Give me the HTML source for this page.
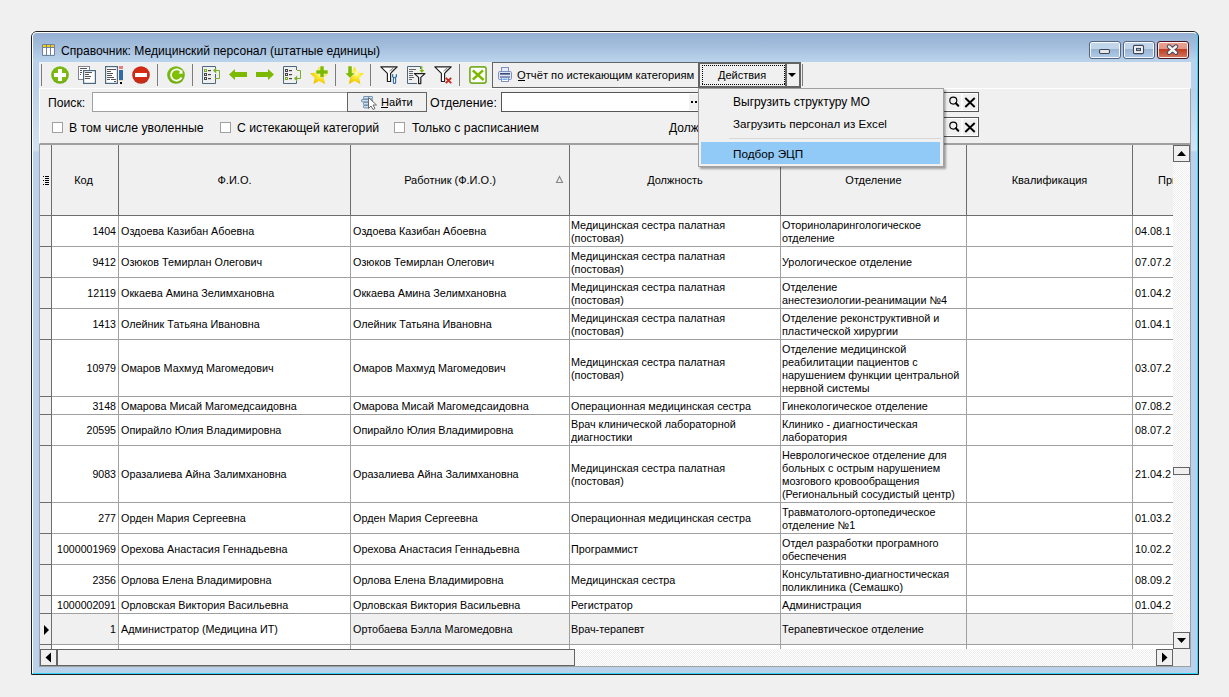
<!DOCTYPE html><html><head><meta charset="utf-8"><title>Справочник</title><style>*{margin:0;padding:0;box-sizing:border-box}
html,body{width:1229px;height:697px;overflow:hidden;background:#f0f0f0;font-family:"Liberation Sans",sans-serif;color:#000}
body{position:relative}
.a{position:absolute}
#win{position:absolute;left:31px;top:31px;width:1168px;height:644px;border:1px solid #1e1e1e;border-radius:6px 6px 0 0;
 background:linear-gradient(#95b0d3 1px,#a3bddc 14px,#bad3ec 29px,#b9d1ea 31px,#b9d1ea 100%)}
#wini{position:absolute;left:0;top:0;right:0;bottom:0;border-radius:5px 5px 0 0;border-top:1px solid #fff;border-left:1px solid #fff;border-right:1px solid #2ed3ff;border-bottom:1px solid #2ed3ff}
#title{position:absolute;left:61px;top:43px;font-size:12.1px;line-height:16px;color:#000;white-space:nowrap}
#client{position:absolute;left:39px;top:62px;width:1152px;height:605px;background:#f0f0f0}
.sep{position:absolute;top:64px;width:1px;height:22px;background:#7c7c7c}
.ico{position:absolute;top:66px;width:18px;height:18px}
.t11{font-size:11px;line-height:13px;white-space:nowrap}
.t12{font-size:12px;line-height:15px;white-space:nowrap}
#panel{position:absolute;left:39px;top:88px;width:1152px;height:56px;border-top:1px solid #fff;border-left:1px solid #fff;border-right:1px solid #a0a0a0;border-bottom:1px solid #a0a0a0}
.sfr{position:absolute;top:62px;width:6px;height:605px;background:linear-gradient(#b9d1ea 0,#b9d1ea 28px,#d3e3f4 88px,#b9d1ea 90px,#b9d1ea 100%)}
.inp{position:absolute;background:#fff;border:1px solid #a0a0a0}
.chk{position:absolute;top:122px;width:11px;height:11px;background:#fff;border:1px solid #a0a0a0}
.btn{position:absolute;border:1px solid #707070;background:#f0f0f0}
#grid{position:absolute;left:0;top:0;width:1173px;height:649px;overflow:hidden}
.c{position:absolute;font-size:10.8px;line-height:13px;white-space:nowrap;overflow:hidden;color:#000}
.c.r{text-align:right;font-size:10.6px}
.rl{position:absolute;left:40px;width:1133px;height:1px;background:#a0a0a0}
.vl{position:absolute;top:216px;height:433px;width:1px;background:#a0a0a0}
.selbg{position:absolute;background:#f0f0f0}
.ind{position:absolute;left:44px;width:0;height:0;border-left:5px solid #000;border-top:5px solid transparent;border-bottom:5px solid transparent}
.hc{position:absolute;top:145px;height:70px;font-size:11px;line-height:13px;white-space:nowrap;text-align:center}

.capb{width:32px;height:18px;border:1px solid #56657e;border-radius:3px;box-shadow:inset 0 0 0 1px rgba(255,255,255,.85);
 background:linear-gradient(#c3d6eb 0,#c0d4ea 7px,#98b4d3 7px,#a4bfdd 11px,#b3cde9 17px)}
.capx{border-color:#4a1420;background:linear-gradient(#eba393 0,#e39585 7px,#bf3c20 7px,#c8553a 11px,#d7826c 17px)}
.dh{height:1px;background:repeating-linear-gradient(90deg,#000 0 1px,transparent 1px 2px)}
.dv{width:1px;background:repeating-linear-gradient(180deg,#000 0 1px,transparent 1px 2px)}
.chk2{background:repeating-conic-gradient(#fff 0 25%,#eeeeee 0 50%) 0 0/2px 2px}
.sbtn{position:absolute;width:17px;height:17px;background:#f0f0f0;border:1px solid #646464}
.rld{position:absolute;left:40px;width:11px;height:1px;background:#6d6d6d}
.vd{background:#6d6d6d}
</style></head><body>
<div id="win"><div id="wini"></div></div>
<!-- title icon -->
<svg class="a" style="left:42px;top:44px" width="13" height="12" viewBox="42 44 13 12">
<rect x="42" y="44" width="13" height="12" rx="1.2" fill="#6f8399"/>
<g fill="#fff"><rect x="43" y="48" width="3" height="7"/><rect x="47" y="48" width="3" height="7"/><rect x="51" y="48" width="3" height="7"/></g>
<g fill="#f6cc14"><rect x="43" y="45" width="3" height="2"/><rect x="47" y="45" width="3" height="2"/><rect x="51" y="45" width="3" height="2"/></g>
<g fill="#e4f6fb"><rect x="43" y="54" width="3" height="1"/><rect x="47" y="54" width="3" height="1"/><rect x="51" y="54" width="3" height="1"/></g>
</svg>
<div id="title">Справочник: Медицинский персонал (штатные единицы)</div>
<!-- caption buttons -->
<div class="a capb" style="left:1089px;top:41px"></div>
<div class="a capb" style="left:1123px;top:41px"></div>
<div class="a capb capx" style="left:1157px;top:41px"></div>
<svg class="a" style="left:1085px;top:38px" width="110" height="24" viewBox="1085 38 110 24">
<rect x="1099.5" y="49.5" width="10" height="4" rx="1.2" fill="#e8e8e8" stroke="#3c4658" stroke-width="1.1"/>
<rect x="1133.5" y="45.4" width="10" height="8.2" rx="1.2" fill="#f2f2f2" stroke="#3c4658" stroke-width="1.1"/>
<rect x="1136.5" y="48.4" width="4" height="2.2" fill="#9ab6d6" stroke="#3c4658" stroke-width="1"/>
<path d="M1169 46.5 L1172.5 49.6 L1176 46.5 M1169 52.7 L1172.5 49.6 L1176 52.7" fill="none" stroke="#3c4658" stroke-width="4.4" stroke-linecap="round" stroke-linejoin="round"/>
<path d="M1169 46.5 L1172.5 49.6 L1176 46.5 M1169 52.7 L1172.5 49.6 L1176 52.7" fill="none" stroke="#f4f4f4" stroke-width="2.5" stroke-linecap="round" stroke-linejoin="round"/>
</svg>
<div class="sfr" style="left:33px"></div><div class="sfr" style="left:1191px"></div>
<div id="client"></div>
<!-- toolbar -->
<div class="sep" style="left:41px"></div>
<div class="sep" style="left:157px"></div>
<div class="sep" style="left:192px"></div>
<div class="sep" style="left:335px"></div>
<div class="sep" style="left:370px"></div>
<div class="sep" style="left:459px"></div>
<div class="sep" style="left:802px"></div>
<!-- report button -->
<div class="a" style="left:492px;top:62px;width:207px;height:26px;border:1px solid #646464;border-right:none;background:#f0f0f0"></div>
<div class="a t11" style="left:517px;top:69px;font-size:11.2px">Отчёт по истекающим категориям</div>
<div class="a" style="left:518px;top:80px;width:7px;height:1px;background:#000"></div>
<!-- actions button -->
<div class="a" style="left:698px;top:62px;width:103px;height:26px;border:2px solid #646464;background:#f0f0f0"></div>
<div class="a dh" style="left:702px;top:65px;width:83px"></div><div class="a dh" style="left:702px;top:84px;width:83px"></div><div class="a dv" style="left:702px;top:65px;height:20px"></div><div class="a dv" style="left:784px;top:65px;height:20px"></div>
<div class="a" style="left:785px;top:62px;width:2px;height:26px;background:#646464"></div>
<div class="a t11" style="left:718px;top:69px">Действия</div>
<div class="a" style="left:788px;top:73px;width:0;height:0;border-top:4px solid #000;border-left:4px solid transparent;border-right:4px solid transparent"></div>
<!-- panel -->
<div id="panel"></div>
<div class="a t12" style="left:48px;top:96px;font-size:12.2px">Поиск:</div>
<div class="inp" style="left:92px;top:92px;width:256px;height:20px"></div>
<div class="btn" style="left:347px;top:92px;width:80px;height:20px;border-color:#646464"></div>
<div class="a t11" style="left:381px;top:96px;font-size:11.1px">Найти</div>
<div class="a" style="left:381px;top:107px;width:7px;height:1px;background:#000"></div>
<svg class="a" style="left:360px;top:95px" width="18" height="16" viewBox="360 95 18 16">
<g fill="#cfdeea" stroke="#7193b2" stroke-width="1">
<rect x="363.5" y="96.5" width="9" height="2.4" rx="0.6"/>
<rect x="361.5" y="99.5" width="7" height="2.4" rx="0.6"/>
<rect x="363.5" y="102.5" width="5" height="2.4" rx="0.6"/>
<rect x="363.5" y="105.5" width="5" height="2.4" rx="0.6"/>
<rect x="369.5" y="99.5" width="3" height="2.4" rx="0.6"/>
</g>
<path d="M368.5 97.5 V108.5 L371 106 L373 109.5 L375 108.5 L373 105 L376.5 105 Z" fill="#fff" stroke="#6a6a6a" stroke-width="1"/>
</svg>
<div class="a t12" style="left:430px;top:96px;font-size:12.4px">Отделение:</div>
<div class="inp" style="left:501px;top:92px;width:478px;height:20px;border-color:#555"></div>
<div class="a" style="left:689px;top:94px;width:20px;height:16px;background:#f0f0f0"></div>
<div class="a" style="left:691px;top:101px;width:2px;height:2px;background:#000"></div>
<div class="a" style="left:695px;top:101px;width:2px;height:2px;background:#000"></div>
<div class="a" style="left:699px;top:101px;width:2px;height:2px;background:#000"></div>
<div class="a" style="left:947px;top:94px;width:14px;height:16px;background:#f0f0f0"></div>
<div class="a" style="left:963px;top:94px;width:14px;height:16px;background:#f0f0f0"></div>

<div class="chk" style="left:52px"></div>
<div class="a t12" style="left:69px;top:121px;font-size:12.25px">В том числе уволенные</div>
<div class="chk" style="left:220px"></div>
<div class="a t12" style="left:237px;top:121px;font-size:12.25px">С истекающей категорий</div>
<div class="chk" style="left:394px"></div>
<div class="a t12" style="left:412px;top:121px;font-size:12.25px">Только с расписанием</div>
<div class="a t12" style="left:669px;top:121px">Должность:</div>
<div class="inp" style="left:737px;top:117px;width:242px;height:20px;border-color:#555"></div>
<div class="a" style="left:947px;top:119px;width:14px;height:16px;background:#f0f0f0"></div>
<div class="a" style="left:963px;top:119px;width:14px;height:16px;background:#f0f0f0"></div>
<svg class="a" style="left:945px;top:92px" width="34" height="46" viewBox="945 92 34 46">
<g id="lk"><circle cx="953.3" cy="100.6" r="3.5" fill="none" stroke="#000" stroke-width="1.15"/><path d="M955.8 103.2 L958.3 105.8" stroke="#000" stroke-width="2" stroke-linecap="round"/>
<path d="M965.3 98 L974.7 107 M974.7 98 L965.3 107" stroke="#000" stroke-width="1.9"/></g>
<use href="#lk" y="25"/>
</svg>
<!-- grid background -->
<div class="a" style="left:39px;top:144px;width:1152px;height:1px;background:#a0a0a0"></div>
<div class="a" style="left:39px;top:145px;width:1px;height:522px;background:#a0a0a0"></div>
<div class="a" style="left:40px;top:145px;width:1133px;height:70px;background:#f0f0f0"></div>
<div class="a" style="left:40px;top:215px;width:1133px;height:1px;background:#6d6d6d"></div>
<div class="a" style="left:40px;top:216px;width:1133px;height:433px;background:#fff"></div>
<div class="a" style="left:40px;top:216px;width:11px;height:433px;background:#f0f0f0"></div>
<div class="a" style="left:51px;top:145px;width:1px;height:70px;background:#6d6d6d"></div>
<div class="a" style="left:118px;top:145px;width:1px;height:70px;background:#6d6d6d"></div>
<div class="a" style="left:350px;top:145px;width:1px;height:70px;background:#6d6d6d"></div>
<div class="a" style="left:569px;top:145px;width:1px;height:70px;background:#6d6d6d"></div>
<div class="a" style="left:780px;top:145px;width:1px;height:70px;background:#6d6d6d"></div>
<div class="a" style="left:966px;top:145px;width:1px;height:70px;background:#6d6d6d"></div>
<div class="a" style="left:1132px;top:145px;width:1px;height:70px;background:#6d6d6d"></div>
<div class="hc" style="left:52px;width:63px;padding-top:29px">Код</div>
<div class="hc" style="left:119px;width:231px;padding-top:29px">Ф.И.О.</div>
<div class="hc" style="left:351px;width:198px;padding-top:29px">Работник (Ф.И.О.)</div>
<div class="hc" style="left:570px;width:210px;padding-top:29px">Должность</div>
<div class="hc" style="left:781px;width:185px;padding-top:29px">Отделение</div>
<div class="hc" style="left:967px;width:165px;padding-top:29px">Квалификация</div>
<div class="a t11" style="left:1158px;top:174px;width:15px;overflow:hidden">При</div>
<div class="a" style="left:1190px;top:145px;width:1px;height:522px;background:#a0a0a0"></div>
<div class="a" style="left:39px;top:666px;width:1152px;height:1px;background:#a0a0a0"></div>
<svg class="a" style="left:40px;top:170px" width="530" height="20" viewBox="40 170 530 20">
<g fill="#000"><rect x="43" y="176" width="1" height="1"/><rect x="43" y="180" width="1" height="1"/><rect x="43" y="184" width="1" height="1"/>
<rect x="45" y="176" width="4" height="1"/><rect x="45" y="178" width="4" height="1"/><rect x="45" y="180" width="4" height="1"/><rect x="45" y="182" width="4" height="1"/><rect x="45" y="184" width="4" height="1"/></g>
<path d="M559.5 176.5 L556.5 182.5 H562.5 Z" fill="none" stroke="#858585" stroke-width="1.1"/>
</svg>

<svg class="a" style="left:0;top:60px" width="520" height="30" viewBox="0 60 520 30">
<defs>
<radialGradient id="gG" cx="0.5" cy="0.45" r="0.55"><stop offset="0" stop-color="#84c400"/><stop offset="0.75" stop-color="#79b80e"/><stop offset="1" stop-color="#6ea51e"/></radialGradient>
<radialGradient id="gR" cx="0.5" cy="0.4" r="0.55"><stop offset="0" stop-color="#dc2a10"/><stop offset="0.8" stop-color="#cc2a16"/><stop offset="1" stop-color="#b8301f"/></radialGradient>
<radialGradient id="gS" cx="0.6" cy="0.4" r="0.6"><stop offset="0" stop-color="#fffbd0"/><stop offset="0.35" stop-color="#ffee33"/><stop offset="1" stop-color="#ecc000"/></radialGradient>
</defs>
<!-- add -->
<circle cx="60" cy="75" r="8.8" fill="url(#gG)"/>
<rect x="54" y="73" width="12" height="4" fill="#fff"/>
<rect x="58" y="69" width="4" height="12" fill="#fff"/>
<!-- copy -->
<rect x="78.5" y="66.5" width="11" height="13" fill="#fff" stroke="#80868c"/>
<g fill="#555"><rect x="80" y="68" width="7" height="1"/><rect x="80" y="70" width="2" height="1"/><rect x="80" y="72" width="2" height="1"/><rect x="80" y="74" width="1" height="1"/></g>
<rect x="83.6" y="70.6" width="11.8" height="12.8" fill="#fff" stroke="#4b6a80" stroke-width="1.2"/>
<g fill="#555"><rect x="85" y="72" width="7" height="1"/><rect x="85" y="74" width="4" height="1"/><rect x="85" y="76" width="6" height="1"/><rect x="85" y="78" width="5" height="1"/></g>
<!-- edit -->
<rect x="105.6" y="66.6" width="11.8" height="16.8" fill="#fff" stroke="#4b6a80" stroke-width="1.2"/>
<g fill="#555"><rect x="107" y="69" width="9" height="1"/><rect x="107" y="71" width="4" height="1"/><rect x="107" y="73" width="6" height="1"/><rect x="107" y="75" width="5" height="1"/><rect x="107" y="77" width="7" height="1"/><rect x="107" y="79" width="3" height="1"/><rect x="111" y="79" width="5" height="1"/><rect x="114" y="81" width="2" height="1"/></g>
<rect x="119" y="66" width="4" height="3" fill="#e28080"/>
<rect x="119" y="70" width="4" height="10" fill="#2e6aa6"/>
<rect x="119" y="80" width="4" height="1" fill="#e8d8b0"/>
<rect x="120" y="82" width="2" height="2" fill="#000"/>
<!-- delete -->
<circle cx="141" cy="75" r="8.8" fill="url(#gR)"/>
<rect x="135" y="73" width="12" height="4" fill="#fff"/>
<!-- refresh -->
<circle cx="176" cy="75" r="8.8" fill="url(#gG)"/>
<path d="M181.5 72.2 A5.6 5.6 0 1 0 181.6 77.5" fill="none" stroke="#fff" stroke-width="1.8"/>
<path d="M178.6 73.6 L182.6 73.8 L182.2 69.6 Z" fill="#fff"/>
<!-- list 1 -->
<path d="M215.5 70 V66.5 H202.5 V83.5 H215.5 V74" fill="none" stroke="#4b6a80"/>
<rect x="204.5" y="69.5" width="2" height="2" fill="none" stroke="#78ae28"/>
<rect x="204.5" y="73.5" width="2" height="2" fill="none" stroke="#444"/>
<rect x="204.5" y="77.5" width="2" height="2" fill="none" stroke="#444"/>
<g fill="#444"><rect x="208" y="70" width="3" height="1.2"/><rect x="208" y="74" width="3" height="1.2"/><rect x="208" y="78" width="3" height="1.2"/></g>
<path d="M215 70.5 H219.5 V78.5 H215" fill="none" stroke="#78ae28"/>
<path d="M213 70.5 L216.2 67.6 V73.4 Z" fill="#78ae28"/>
<!-- left arrow -->
<path d="M229 74.5 L235 69 V72 H247 V77 H235 V80 Z" fill="#7cb900"/>
<!-- right arrow -->
<path d="M274 74.5 L268 69 V72 H256 V77 H268 V80 Z" fill="#7cb900"/>
<!-- list 2 -->
<path d="M296.5 70 V66.5 H283.5 V83.5 H296.5 V81" fill="none" stroke="#4b6a80"/>
<rect x="285.5" y="69.5" width="2" height="2" fill="none" stroke="#444"/>
<rect x="285.5" y="73.5" width="2" height="2" fill="none" stroke="#444"/>
<rect x="285.5" y="77.5" width="2" height="2" fill="none" stroke="#78ae28"/>
<g fill="#444"><rect x="289" y="70" width="3" height="1.2"/><rect x="289" y="74" width="3" height="1.2"/><rect x="289" y="78" width="3" height="1.2"/></g>
<path d="M297 70.5 H300.5 V78.5 H296" fill="none" stroke="#78ae28"/>
<path d="M294 78.5 L297.2 75.6 V81.4 Z" fill="#78ae28"/>
<!-- star plus -->
<path d="M319.2 66.4 L322.0 72.4 L328.5 73.2 L323.7 77.7 L325.0 84.1 L319.2 80.9 L313.4 84.1 L314.7 77.7 L309.9 73.2 L316.4 72.4 Z" fill="url(#gS)"/>
<path d="M320 66 H324 V70 H328 V74 H324 V77.5 H320 V74 H316 V70 H320 Z" fill="#7cb900" stroke="#f4f4e0" stroke-width="0.6"/>
<!-- star download -->
<path d="M354.6 66.4 L357.4 72.4 L363.9 73.2 L359.1 77.7 L360.4 84.1 L354.6 80.9 L348.8 84.1 L350.1 77.7 L345.3 73.2 L351.8 72.4 Z" fill="url(#gS)"/>
<path d="M348 66 H352 V73 H355 L350 78 L345 73 H348 Z" fill="#7cb900" stroke="#f0f0f0" stroke-width="0.5"/>
<!-- filter tool -->
<path d="M380.8 66.9 H397.2 L390.6 73.4 V81.5 H387.4 V73.4 Z" fill="#fff" stroke="#1e1e1e" stroke-width="1.15" stroke-linejoin="round"/>
<path d="M389.4 71.2 L393.4 67.8 M391 71.6 L394.6 68.4" stroke="#555" stroke-width="0.7"/>
<path d="M392.6 74.2 V76.6 L393.8 77.6 H395.2 L396.4 76.6 V74.2" fill="none" stroke="#2e6aa6" stroke-width="1.2"/>
<rect x="393.4" y="77.8" width="2.2" height="5.6" rx="0.6" fill="#fff" stroke="#2e6aa6" stroke-width="1.1"/>
<!-- filter doc -->
<path d="M420.5 69 V66.5 H407.5 V83.5 H417" fill="none" stroke="#4b6a80"/>
<g fill="#666"><rect x="409" y="69" width="7" height="1"/><rect x="409" y="71" width="4" height="1"/><rect x="409" y="73" width="4" height="1"/><rect x="409" y="75" width="4" height="1"/><rect x="409" y="77" width="5" height="1"/><rect x="409" y="79" width="3" height="1"/></g>
<path d="M414.4 73.6 H425 L420.8 77.4 V83.6 H418.6 V77.4 Z" fill="#fff" stroke="#1e1e1e" stroke-width="1.2" stroke-linejoin="round"/>
<path d="M421.8 66 V71" stroke="#7cb900" stroke-width="1.2"/>
<path d="M419.6 70 L421.8 73 L424.4 70 Z" fill="#7cb900"/>
<!-- filter x -->
<path d="M434.8 66.9 H451.2 L444.6 73.4 V81.5 H441.4 V73.4 Z" fill="#fff" stroke="#1e1e1e" stroke-width="1.15" stroke-linejoin="round"/>
<path d="M443.4 71.2 L447.4 67.8 M445 71.6 L448.6 68.4" stroke="#555" stroke-width="0.7"/>
<path d="M445.8 77.8 L451.2 83.2 M451.2 77.8 L445.8 83.2" stroke="#c8261c" stroke-width="1.8"/>
<!-- excel -->
<rect x="469.9" y="66.9" width="16.2" height="16.2" rx="2.2" fill="#fff" stroke="#78ae28" stroke-width="1.7"/>
<path d="M472.8 70.4 L483.6 80 M483 70.4 L472.8 79.6" stroke="#7cb900" stroke-width="2.6"/>
<!-- printer -->
<rect x="501.5" y="67.5" width="7" height="5" fill="#e6ecf6" stroke="#7f91c2"/>
<rect x="498.5" y="71.5" width="13" height="8" rx="1.2" fill="#dfe6f3" stroke="#7f91c2"/>
<rect x="500" y="73" width="10" height="1.6" fill="#3a4a7a"/>
<rect x="500" y="76.5" width="10" height="1" fill="#3a4a7a"/>
<rect x="501.5" y="77.5" width="7" height="4" fill="#fff" stroke="#7f91c2"/>
<rect x="502.5" y="78.5" width="5" height="1.5" fill="#6fb0e8"/>
</svg>

<div id="grid">
<div class="rl" style="top:246px"></div>
<div class="rld" style="top:246px"></div>
<div class="c r" style="top:225px;left:52px;width:64px">1404</div>
<div class="c" style="top:225px;left:121px;width:228px">Оздоева Казибан Абоевна</div>
<div class="c" style="top:225px;left:353px;width:215px">Оздоева Казибан Абоевна</div>
<div class="c" style="top:219px;left:571px;width:208px">Медицинская сестра палатная<br>(постовая)</div>
<div class="c" style="top:219px;left:782px;width:183px">Оториноларингологическое<br>отделение</div>
<div class="c" style="top:225px;left:1135px;width:38px">04.08.1</div>
<div class="rl" style="top:277px"></div>
<div class="rld" style="top:277px"></div>
<div class="c r" style="top:256px;left:52px;width:64px">9412</div>
<div class="c" style="top:256px;left:121px;width:228px">Озюков Темирлан Олегович</div>
<div class="c" style="top:256px;left:353px;width:215px">Озюков Темирлан Олегович</div>
<div class="c" style="top:250px;left:571px;width:208px">Медицинская сестра палатная<br>(постовая)</div>
<div class="c" style="top:256px;left:782px;width:183px">Урологическое отделение</div>
<div class="c" style="top:256px;left:1135px;width:38px">07.07.2</div>
<div class="rl" style="top:308px"></div>
<div class="rld" style="top:308px"></div>
<div class="c r" style="top:287px;left:52px;width:64px">12119</div>
<div class="c" style="top:287px;left:121px;width:228px">Оккаева Амина Зелимхановна</div>
<div class="c" style="top:287px;left:353px;width:215px">Оккаева Амина Зелимхановна</div>
<div class="c" style="top:281px;left:571px;width:208px">Медицинская сестра палатная<br>(постовая)</div>
<div class="c" style="top:281px;left:782px;width:183px">Отделение<br>анестезиологии-реанимации №4</div>
<div class="c" style="top:287px;left:1135px;width:38px">01.04.2</div>
<div class="rl" style="top:339px"></div>
<div class="rld" style="top:339px"></div>
<div class="c r" style="top:318px;left:52px;width:64px">1413</div>
<div class="c" style="top:318px;left:121px;width:228px">Олейник Татьяна Ивановна</div>
<div class="c" style="top:318px;left:353px;width:215px">Олейник Татьяна Ивановна</div>
<div class="c" style="top:312px;left:571px;width:208px">Медицинская сестра палатная<br>(постовая)</div>
<div class="c" style="top:312px;left:782px;width:183px">Отделение реконструктивной и<br>пластической хирургии</div>
<div class="c" style="top:318px;left:1135px;width:38px">01.04.1</div>
<div class="rl" style="top:396px"></div>
<div class="rld" style="top:396px"></div>
<div class="c r" style="top:362px;left:52px;width:64px">10979</div>
<div class="c" style="top:362px;left:121px;width:228px">Омаров Махмуд Магомедович</div>
<div class="c" style="top:362px;left:353px;width:215px">Омаров Махмуд Магомедович</div>
<div class="c" style="top:356px;left:571px;width:208px">Медицинская сестра палатная<br>(постовая)</div>
<div class="c" style="top:343px;left:782px;width:183px">Отделение медицинской<br>реабилитации пациентов с<br>нарушением функции центральной<br>нервной системы</div>
<div class="c" style="top:362px;left:1135px;width:38px">03.07.2</div>
<div class="rl" style="top:414px"></div>
<div class="rld" style="top:414px"></div>
<div class="c r" style="top:400px;left:52px;width:64px">3148</div>
<div class="c" style="top:400px;left:121px;width:228px">Омарова Мисай Магомедсаидовна</div>
<div class="c" style="top:400px;left:353px;width:215px">Омарова Мисай Магомедсаидовна</div>
<div class="c" style="top:400px;left:571px;width:208px">Операционная медицинская сестра</div>
<div class="c" style="top:400px;left:782px;width:183px">Гинекологическое отделение</div>
<div class="c" style="top:400px;left:1135px;width:38px">07.08.2</div>
<div class="rl" style="top:445px"></div>
<div class="rld" style="top:445px"></div>
<div class="c r" style="top:424px;left:52px;width:64px">20595</div>
<div class="c" style="top:424px;left:121px;width:228px">Опирайло Юлия Владимировна</div>
<div class="c" style="top:424px;left:353px;width:215px">Опирайло Юлия Владимировна</div>
<div class="c" style="top:418px;left:571px;width:208px">Врач клинической лабораторной<br>диагностики</div>
<div class="c" style="top:418px;left:782px;width:183px">Клинико - диагностическая<br>лаборатория</div>
<div class="c" style="top:424px;left:1135px;width:38px">08.07.2</div>
<div class="rl" style="top:502px"></div>
<div class="rld" style="top:502px"></div>
<div class="c r" style="top:468px;left:52px;width:64px">9083</div>
<div class="c" style="top:468px;left:121px;width:228px">Оразалиева Айна Залимхановна</div>
<div class="c" style="top:468px;left:353px;width:215px">Оразалиева Айна Залимхановна</div>
<div class="c" style="top:462px;left:571px;width:208px">Медицинская сестра палатная<br>(постовая)</div>
<div class="c" style="top:449px;left:782px;width:183px">Неврологическое отделение для<br>больных с острым нарушением<br>мозгового кровообращения<br>(Региональный сосудистый центр)</div>
<div class="c" style="top:468px;left:1135px;width:38px">21.04.2</div>
<div class="rl" style="top:533px"></div>
<div class="rld" style="top:533px"></div>
<div class="c r" style="top:512px;left:52px;width:64px">277</div>
<div class="c" style="top:512px;left:121px;width:228px">Орден Мария Сергеевна</div>
<div class="c" style="top:512px;left:353px;width:215px">Орден Мария Сергеевна</div>
<div class="c" style="top:512px;left:571px;width:208px">Операционная медицинская сестра</div>
<div class="c" style="top:506px;left:782px;width:183px">Травматолого-ортопедическое<br>отделение №1</div>
<div class="c" style="top:512px;left:1135px;width:38px">01.03.2</div>
<div class="rl" style="top:564px"></div>
<div class="rld" style="top:564px"></div>
<div class="c r" style="top:543px;left:52px;width:64px">1000001969</div>
<div class="c" style="top:543px;left:121px;width:228px">Орехова Анастасия Геннадьевна</div>
<div class="c" style="top:543px;left:353px;width:215px">Орехова Анастасия Геннадьевна</div>
<div class="c" style="top:543px;left:571px;width:208px">Программист</div>
<div class="c" style="top:537px;left:782px;width:183px">Отдел разработки програмного<br>обеспечения</div>
<div class="c" style="top:543px;left:1135px;width:38px">10.02.2</div>
<div class="rl" style="top:595px"></div>
<div class="rld" style="top:595px"></div>
<div class="c r" style="top:574px;left:52px;width:64px">2356</div>
<div class="c" style="top:574px;left:121px;width:228px">Орлова Елена Владимировна</div>
<div class="c" style="top:574px;left:353px;width:215px">Орлова Елена Владимировна</div>
<div class="c" style="top:574px;left:571px;width:208px">Медицинская сестра</div>
<div class="c" style="top:568px;left:782px;width:183px">Консультативно-диагностическая<br>поликлиника (Семашко)</div>
<div class="c" style="top:574px;left:1135px;width:38px">08.09.2</div>
<div class="rl" style="top:613px"></div>
<div class="rld" style="top:613px"></div>
<div class="c r" style="top:599px;left:52px;width:64px">1000002091</div>
<div class="c" style="top:599px;left:121px;width:228px">Орловская Виктория Васильевна</div>
<div class="c" style="top:599px;left:353px;width:215px">Орловская Виктория Васильевна</div>
<div class="c" style="top:599px;left:571px;width:208px">Регистратор</div>
<div class="c" style="top:599px;left:782px;width:183px">Администрация</div>
<div class="c" style="top:599px;left:1135px;width:38px">01.04.2</div>
<div class="selbg" style="top:614px;height:30px;left:52px;width:66px"></div>
<div class="selbg" style="top:614px;height:30px;left:351px;width:822px"></div>
<div class="ind" style="top:625px"></div>
<div class="rl" style="top:644px"></div>
<div class="rld" style="top:644px"></div>
<div class="c r" style="top:623px;left:52px;width:64px">1</div>
<div class="c" style="top:623px;left:121px;width:228px">Администратор (Медицина ИТ)</div>
<div class="c" style="top:623px;left:353px;width:215px">Ортобаева Бэлла Магомедовна</div>
<div class="c" style="top:623px;left:571px;width:208px">Врач-терапевт</div>
<div class="c" style="top:623px;left:782px;width:183px">Терапевтическое отделение</div>
<div class="c" style="top:623px;left:1135px;width:38px"></div>
<div class="vl vd" style="left:51px"></div>
<div class="vl" style="left:118px"></div>
<div class="vl" style="left:350px"></div>
<div class="vl" style="left:569px"></div>
<div class="vl" style="left:780px"></div>
<div class="vl" style="left:966px"></div>
<div class="vl" style="left:1132px"></div>
</div>
<!-- vertical scrollbar -->
<div class="a chk2" style="left:1173px;top:145px;width:17px;height:504px"></div>
<div class="sbtn" style="left:1173px;top:145px"></div>
<div class="sbtn" style="left:1173px;top:632px"></div>
<div class="sbtn" style="left:1173px;top:467px;height:8px"></div>
<div class="a" style="left:1173px;top:649px;width:17px;height:17px;background:#f0f0f0"></div>
<!-- horizontal scrollbar -->
<div class="a chk2" style="left:40px;top:649px;width:1133px;height:17px"></div>
<div class="sbtn" style="left:40px;top:649px"></div>
<div class="sbtn" style="left:57px;top:649px;width:518px"></div>
<div class="sbtn" style="left:1156px;top:649px"></div>
<svg class="a" style="left:0;top:140px" width="1229" height="530" viewBox="0 140 1229 530">
<path d="M1177 156 L1181.5 151 L1186 156 Z" fill="#000"/>
<path d="M1177 638 L1181.5 643 L1186 638 Z" fill="#000"/>
<path d="M51 652.5 L45.5 657.5 L51 662.5 Z" fill="#000"/>
<path d="M1162 652.5 L1167.5 657.5 L1162 662.5 Z" fill="#000"/>
</svg>
<!-- menu -->
<div class="a" style="left:698px;top:88px;width:246px;height:79px;background:#f0f0f0;border:1px solid #a0a0a0;box-shadow:2px 2px 2px rgba(0,0,0,.35)"></div>
<div class="a" style="left:729px;top:138px;width:212px;height:1px;background:#d7d7d7"></div>
<div class="a" style="left:701px;top:142px;width:239px;height:22px;background:#91c9f7"></div>
<div class="a t12" style="left:733px;top:95px">Выгрузить структуру МО</div>
<div class="a t12" style="left:733px;top:116px;font-size:11.6px">Загрузить персонал из Excel</div>
<div class="a t12" style="left:733px;top:146px;font-size:11.75px">Подбор ЭЦП</div>

</body></html>
